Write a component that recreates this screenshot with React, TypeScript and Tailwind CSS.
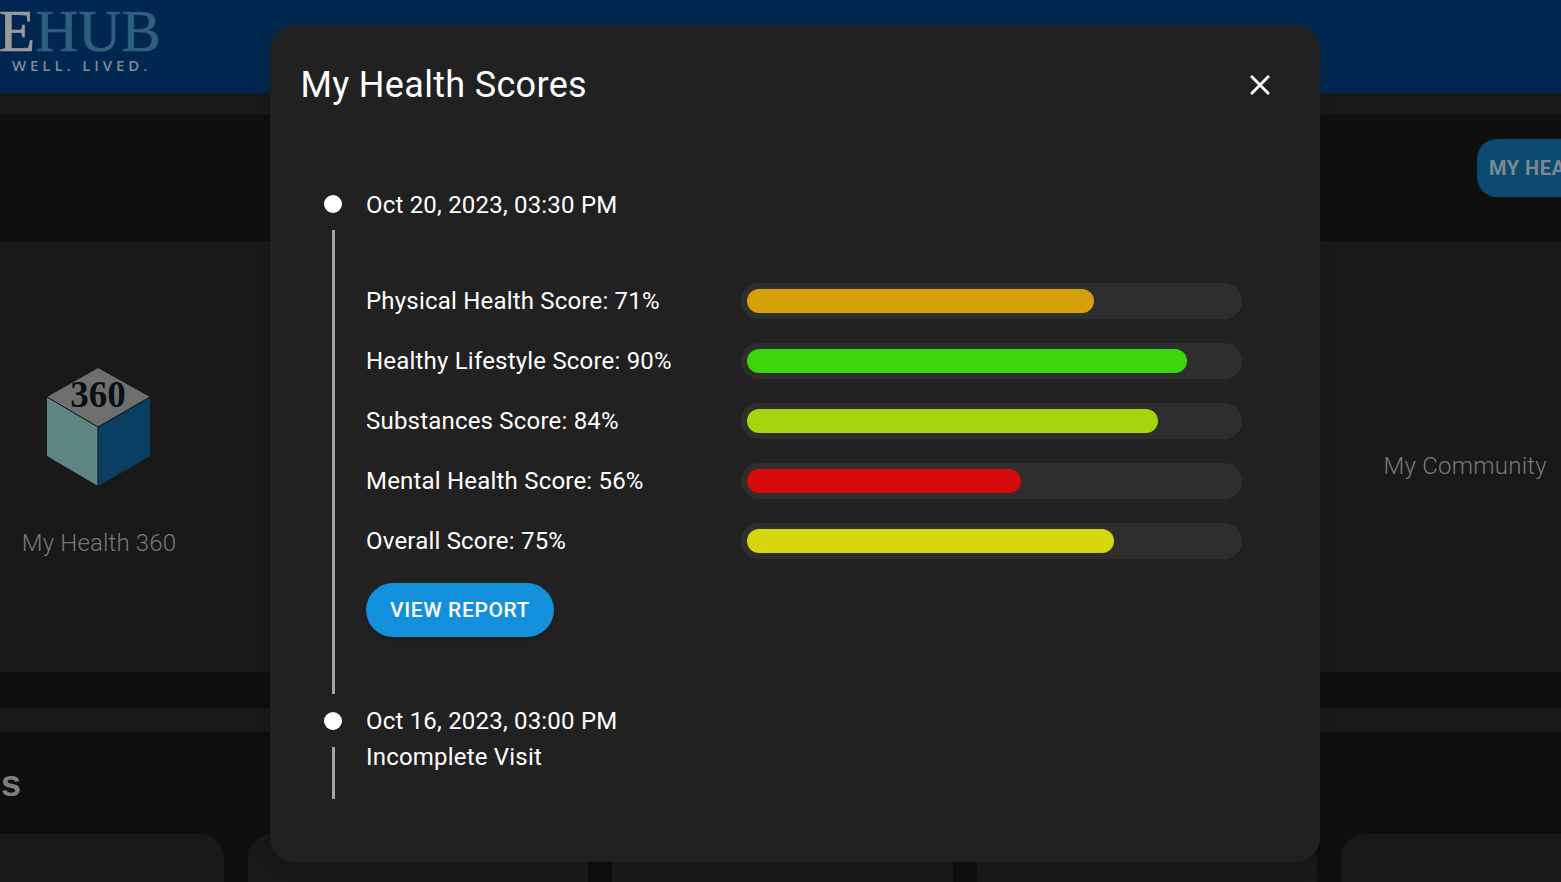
const scores = [
  { label: "Physical Health Score: 71%", pct: 71, color: "#d6a00b" },
  { label: "Healthy Lifestyle Score: 90%", pct: 90, color: "#3bd60b" },
  { label: "Substances Score: 84%", pct: 84, color: "#a5d60b" },
  { label: "Mental Health Score: 56%", pct: 56, color: "#d60b0b" },
  { label: "Overall Score: 75%", pct: 75, color: "#d6d60b" },
];

function Cube() {
  return (
    <svg width="106" height="120" viewBox="0 0 106 120">
      <polygon points="52,1 104,30 52,60 1,30" fill="#6f6f6f" />
      <polygon points="1,30 52,60 52,119 1,89" fill="#5f8582" />
      <polygon points="104,30 52,60 52,119 104,89" fill="#0a3f63" />
      <path d="M1 30 L52 60 L104 30 M52 60 L52 119" fill="none" stroke="#0a0f14" strokeWidth="1" />
      <text x="52" y="40" textAnchor="middle" fontFamily="'Liberation Serif', serif" fontWeight="700" fontSize="37" fill="#0a0f14">360</text>
    </svg>
  );
}

function Dot() {
  return <div className="w-[18px] h-[18px] rounded-full bg-white shrink-0" />;
}

export default function App() {
  return (
    <div className="relative w-[1561px] h-[882px] overflow-hidden bg-[#0f0f0f] font-['Roboto',sans-serif]">
      <header className="h-[93px] bg-[#00274f] pt-[6px]">
        <div className="-ml-[1px] leading-[51px] text-[59px] tracking-[0.4px] [-webkit-text-stroke:0.7px] font-['Liberation_Serif',serif] text-[#2f5f80]">
          <span className="text-[#9a9a9a]">E</span>HUB
        </div>
        <div className="ml-[12px] text-[15px] leading-[16px] tracking-[3.9px] font-semibold font-['Open_Sans',sans-serif] text-[#7f8a96]">
          WELL. LIVED.
        </div>
      </header>
      <div className="h-[22px] bg-[#191919]" />
      <div className="h-[126px] bg-[#0f0f0f] flex justify-end pt-[24px]">
        <div className="w-[84px] h-[58px] overflow-hidden rounded-l-[20px] bg-[#0b4a70] pl-[12px] flex items-center whitespace-nowrap font-bold tracking-[0.5px] text-[20px] text-[#7b8890]">
          MY HEALTH
        </div>
      </div>
      <div className="h-[431px] bg-[#191919] flex justify-between">
        <div className="w-[198px] flex flex-col items-center pt-[126px]">
          <Cube />
          <div className="mt-[40px] text-[24px] leading-[32px] tracking-[0.15px] font-light text-[#787878]">My Health 360</div>
        </div>
        <div className="pr-[14px] pt-[209px] text-[24px] leading-[32px] tracking-[0.25px] font-light text-[#787878]">My Community</div>
      </div>
      <div className="h-[36px] bg-[#0f0f0f]" />
      <div className="h-[24px] bg-[#191919]" />
      <div className="h-[102px] bg-[#0f0f0f] flex items-center">
        <div className="-ml-[127px] mt-[2px] text-[36px] font-bold font-['Liberation_Sans',sans-serif] text-[#7f7f7f]">Services</div>
      </div>
      <div className="flex gap-[24px] -ml-[116.4px]">
        {[0, 1, 2, 3, 4].map((i) => (
          <div key={i} className="w-[340.4px] h-[200px] shrink-0 rounded-[24px] bg-[#191919]" />
        ))}
      </div>

      <div className="absolute left-[270px] top-[25px] w-[1050px] h-[837px] rounded-[24px] bg-[#212121] text-white shadow-lg">
        <div className="flex items-center justify-between pl-[30.5px] pr-[43px] h-[120px]">
          <div className="text-[36px] leading-[42px] tracking-[0.32px]">My Health Scores</div>
          <svg width="34" height="34" viewBox="0 0 24 24" fill="#ffffff">
            <path d="M19 6.41 17.59 5 12 10.59 6.41 5 5 6.41 10.59 12 5 17.59 6.41 19 12 13.41 17.59 19 19 17.59 13.41 12z" />
          </svg>
        </div>
        <div className="pl-[54px] pt-[50px] tracking-[0.2px]">
          <div className="flex">
            <div className="w-[42px] flex flex-col items-start shrink-0">
              <Dot />
              <div className="ml-[8px] mt-[17px] w-[3px] h-[464px] bg-[#a3a3a3]" />
            </div>
            <div>
              <div className="text-[24px] leading-[36px] -mt-[8px]">Oct 20, 2023, 03:30 PM</div>
              <div className="mt-[60px] flex flex-col gap-[24px]">
                {scores.map((s) => (
                  <div key={s.label} className="flex items-center">
                    <div className="w-[375px] text-[24px] leading-[36px]">{s.label}</div>
                    <div className="w-[501px] h-[36px] rounded-full bg-[#2e2e2e] p-[6px]">
                      <div className="h-[24px] rounded-full" style={{ width: `${s.pct}%`, backgroundColor: s.color }} />
                    </div>
                  </div>
                ))}
              </div>
              <div className="mt-[24px] w-[188px] h-[54px] pt-[1px] rounded-[27px] bg-[#1290dc] flex items-center justify-center font-medium tracking-[0.6px] text-[21px] shadow-md">
                VIEW REPORT
              </div>
            </div>
          </div>
          <div className="flex mt-[18px]">
            <div className="w-[42px] flex flex-col items-start shrink-0">
              <Dot />
              <div className="ml-[8px] mt-[17px] w-[3px] h-[52px] bg-[#a3a3a3]" />
            </div>
            <div className="text-[24px] leading-[36px] -mt-[9px]">
              <div>Oct 16, 2023, 03:00 PM</div>
              <div>Incomplete Visit</div>
            </div>
          </div>
        </div>
      </div>
    </div>
  );
}
